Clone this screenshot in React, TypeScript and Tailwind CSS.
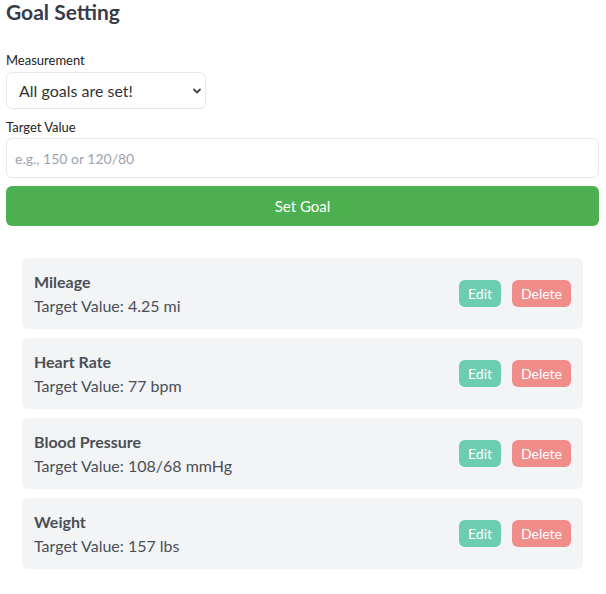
import { useState } from 'react';

type Goal = {
  id: number;
  name: string;
  value: string;
};

const initialGoals: Goal[] = [
  { id: 1, name: 'Mileage', value: '4.25 mi' },
  { id: 2, name: 'Heart Rate', value: '77 bpm' },
  { id: 3, name: 'Blood Pressure', value: '108/68 mmHg' },
  { id: 4, name: 'Weight', value: '157 lbs' },
];

function GoalCard({ goal }: { goal: Goal }) {
  return (
    <div className="flex items-center justify-between rounded-md bg-[#f2f4f6] pl-3 pr-3 h-[71px]">
      <div className="flex flex-col">
        <span className="text-[16px] leading-6 font-bold text-[#4a4f57]">{goal.name}</span>
        <span className="text-[16px] leading-6 text-[#4a4f57]">Target Value: {goal.value}</span>
      </div>
      <div className="flex items-center gap-[11px]">
        <button className="h-[27px] px-[9px] rounded-md bg-[#6dcdaf] text-white text-[14px]">Edit</button>
        <button className="h-[27px] px-[9px] rounded-md bg-[#f08c8a] text-white text-[14px]">Delete</button>
      </div>
    </div>
  );
}

export default function App() {
  const [goals] = useState<Goal[]>(initialGoals);
  const [target, setTarget] = useState('');

  return (
    <div className="min-h-screen bg-white px-[6px] pr-[7px] font-['Lato','Noto_Sans',sans-serif] text-[#374151]">
      <h1 className="text-[21px] leading-[24px] font-bold text-[#373c4a]">Goal Setting</h1>

      {/* Form */}
      <div className="mt-[26px]">
        <label className="block text-[13px] leading-5 text-[#222]">Measurement</label>
        <div className="relative mt-[2px] w-[200px]">
          <select className="w-full h-[37px] appearance-none rounded-md border border-[#e5e7eb] bg-white pl-[12px] pr-8 text-[16px] text-[#333] outline-none">
            <option>All goals are set!</option>
          </select>
          <svg
            className="pointer-events-none absolute right-[4px] top-1/2 -translate-y-1/2"
            width="10"
            height="10"
            viewBox="0 0 10 10"
          >
            <path d="M2 3.5 L5 6.5 L8 3.5" fill="none" stroke="#444" strokeWidth="1.8" strokeLinecap="round" strokeLinejoin="round" />
          </svg>
        </div>

        <label className="mt-[8px] block text-[13px] leading-5 text-[#222]">Target Value</label>
        <input
          type="text"
          value={target}
          onChange={(e) => setTarget(e.target.value)}
          placeholder="e.g., 150 or 120/80"
          className="mt-[1px] w-full h-[40px] rounded-md border border-[#e5e7eb] px-[8px] text-[14px] placeholder:text-[#9ca3af] outline-none"
        />

        <button className="mt-[8px] w-full h-[40px] rounded-md bg-[#4caf50] text-white text-[15px]">
          Set Goal
        </button>
      </div>

      {/* Goal list */}
      <div className="mx-4 mt-[32px] flex flex-col gap-[9px] pb-6">
        {goals.map((goal) => (
          <GoalCard key={goal.id} goal={goal} />
        ))}
      </div>
    </div>
  );
}
